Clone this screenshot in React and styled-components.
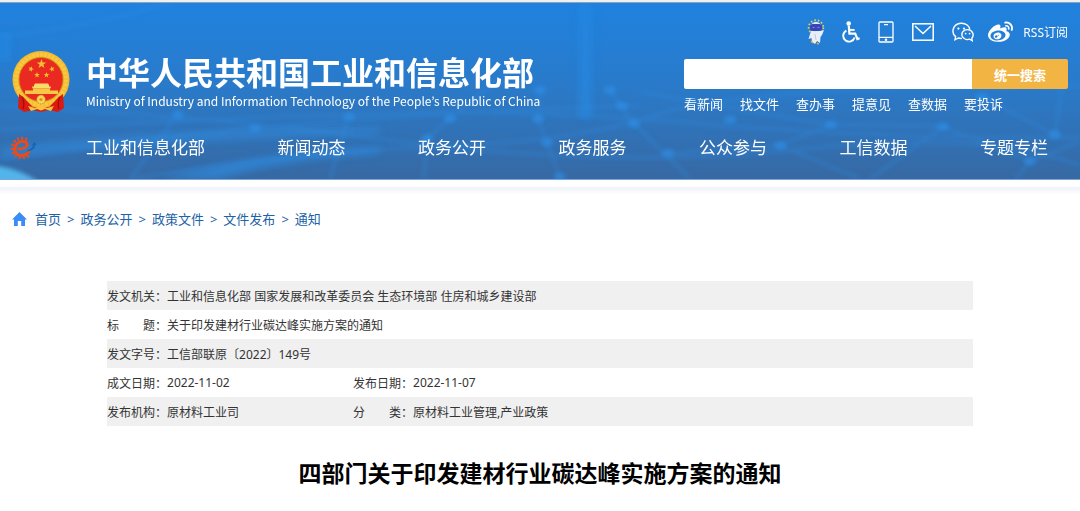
import styled, { createGlobalStyle } from 'styled-components';
import { FaWeibo } from 'react-icons/fa';

const GlobalStyle = createGlobalStyle`
  * {
    box-sizing: border-box;
  }

  body {
    margin: 0;
    background: #fff;
    font-family: 'Noto Sans', 'Noto Sans CJK SC', sans-serif;
    color: #333;
  }

  a {
    color: inherit;
    text-decoration: none;
    white-space: nowrap;
  }
`;

const Header = styled.header`
  position: relative;
  border-top: 2px solid #f0f0f0;
  border-bottom: 1px solid #7ba6d8;
  background: linear-gradient(#1f82df, #2a7ac9 48%, #3769a3);
  color: #fff;
`;

const Backdrop = styled.svg`
  position: absolute;
  inset: 0;
  width: 100%;
  height: 100%;
  border-top: 1px solid #8aa3bd;
`;

const HeaderInner = styled.div`
  position: relative;
  padding: 18px 12px 0;
`;

const HeaderTop = styled.div`
  display: flex;
  justify-content: space-between;
`;

const Brand = styled.a`
  display: flex;
  gap: 16px;
  padding-top: 31px;
`;

const BrandText = styled.div`
  font-family: 'Noto Sans CJK SC', sans-serif;
`;

const BrandName = styled.div`
  font-size: 32px;
  line-height: 40px;
  font-weight: 700;
`;

const BrandEnglish = styled.div`
  font-family: 'Noto Sans CJK KR', sans-serif;
  font-size: 12px;
  line-height: 20px;
`;

const Aside = styled.div`
  flex: 0 1 384px;
`;

const Tools = styled.div`
  display: flex;
  justify-content: flex-end;
  align-items: center;
  gap: 10px;
  height: 24px;
  font-size: 12px;
`;

const ToolLink = styled.a`
  display: flex;
  justify-content: center;
  width: ${props => props.$width}px;
`;

const SearchForm = styled.form`
  display: flex;
  height: 30px;
  margin-top: 15px;
  border-radius: 2px;
  overflow: hidden;
`;

const SearchInput = styled.input`
  flex: 1;
  min-width: 0;
  padding: 0 8px;
  border: 0;
  outline: 0;
  background: #fff;
  font: inherit;
`;

const SearchButton = styled.button`
  width: 96px;
  padding: 0;
  border: 0;
  background: #f2b544;
  color: #fff;
  font: inherit;
  font-size: 13px;
  font-weight: 700;
`;

const QuickLinks = styled.div`
  display: flex;
  gap: 17px;
  margin-top: 6px;
  font-size: 13px;
  line-height: 18px;
`;

const MainNav = styled.nav`
  display: flex;
  align-items: center;
  height: 62px;
  margin-top: 4px;
`;

const NavItems = styled.div`
  display: flex;
  flex: 1;
  justify-content: space-between;
  padding: 0 20px 0 48px;
  font-size: 17px;
  line-height: 24px;
`;

const EnterpriseLogo = styled.a`
  display: flex;
  margin-left: -2px;
`;

const Strip = styled.div`
  height: 15px;
  background: linear-gradient(#fff 7px, #eff2fa 7px, #fff 15px);
`;

const Breadcrumb = styled.nav`
  display: flex;
  align-items: center;
  gap: 6px;
  padding: 14px 12px 0;
  color: #2161a5;
  font-size: 13px;
  line-height: 20px;
`;

const HomeIcon = styled.svg`
  margin-right: 2px;
`;

const Article = styled.main`
  padding: 52px 12px 24px;
`;

const InfoTable = styled.table`
  width: 82%;
  margin: 0 auto;
  border-collapse: collapse;
  table-layout: fixed;
  font-size: 12px;
`;

const InfoColumn = styled.col`
  width: ${props => props.$width};
`;

const InfoRow = styled.tr`
  height: 29px;

  &:nth-child(odd) {
    background: #f0f0f0;
  }
`;

const InfoLabel = styled.th`
  padding: 0;
  font-weight: 400;
  text-align: left;
  white-space: nowrap;
`;

const InfoValue = styled.td`
  padding: 0;
`;

const Headline = styled.h1`
  margin: 30px 0 0;
  color: #000;
  font-size: 23px;
  line-height: 34px;
  font-weight: 700;
  text-align: center;
`;

const NODES = [
  [450, 117],
  [540, 88],
  [610, 88],
  [622, 104],
  [634, 122],
  [547, 141],
  [668, 152],
  [538, 117],
  [730, 118],
  [780, 144],
  [831, 123],
  [943, 125],
  [1055, 133],
  [1030, 160],
  [427, 137],
  [255, 127],
  [178, 113],
  [349, 115],
  [560, 176],
  [982, 95],
];

const LINES = [
  'M0 128 Q200 118 360 112 T700 122 T1080 136',
  'M0 158 Q180 132 330 120 T640 104',
  'M0 104 Q180 112 400 140 T800 148 T1080 164',
  'M130 178 Q300 150 440 145 T660 112 T1080 84',
  'M450 117 L427 137 L424 178',
  'M450 117 L520 60',
  'M540 88 L538 117 L560 176',
  'M610 88 L634 122 L690 178',
  'M668 152 L780 144 L831 123 L943 125',
  'M780 144 L860 178',
  'M943 125 L870 178',
  'M943 125 L1030 160 L1080 140',
  'M982 95 L1055 133 L1064 70',
  'M830 123 L640 90',
  'M1030 160 L1016 178',
  'M178 113 L130 178',
  'M349 115 L330 178',
  'M0 34 Q90 24 170 0',
];

const HeaderBackdrop = () => (
  <Backdrop viewBox="0 0 1080 178" preserveAspectRatio="none" aria-hidden="true">
    <defs>
      <filter id="soft" x="-20%" y="-20%" width="140%" height="140%">
        <feGaussianBlur stdDeviation="2" />
      </filter>
      <filter id="glow" x="-50%" y="-50%" width="200%" height="200%">
        <feGaussianBlur stdDeviation="4" />
      </filter>
      <linearGradient id="beam" x1="0" y1="0" x2="0" y2="1">
        <stop offset="0" stopColor="#2491ef" stopOpacity="0.3" />
        <stop offset="1" stopColor="#2491ef" stopOpacity="0.6" />
      </linearGradient>
    </defs>
    <g fill="none" stroke="#2d8fe8" strokeWidth="3" opacity="0.35" filter="url(#soft)">
      {LINES.map(d => (
        <path key={d} d={d} />
      ))}
    </g>
    <g fill="#2f93ee" opacity="0.6" filter="url(#soft)">
      {NODES.map(([x, y]) => (
        <ellipse key={`${x}-${y}`} cx={x} cy={y} rx="6" ry="4" />
      ))}
    </g>
    <g filter="url(#glow)">
      <rect x="580" y="0" width="11" height="116" fill="url(#beam)" />
      <rect x="0" y="30" width="9" height="30" fill="#2491ef" opacity="0.5" />
      <path d="M0 146 Q180 126 380 126 L380 132 Q180 138 0 156 Z" fill="#2f8fe6" opacity="0.5" />
      <path d="M160 178 Q260 150 380 146 L380 152 Q270 160 220 178 Z" fill="#2f8fe6" opacity="0.6" />
    </g>
    <path d="M-6 164 Q22 168 40 182 L-6 182 Z" fill="#56c2f7" opacity="0.85" filter="url(#soft)" />
  </Backdrop>
);

const STAR = 'M0 -5 L1.2 -1.6 L4.8 -1.5 L1.9 0.6 L2.9 4 L0 2 L-2.9 4 L-1.9 0.6 L-4.8 -1.5 L-1.2 -1.6 Z';

const Emblem = () => (
  <svg width="58" height="61" viewBox="0 0 58 61" aria-hidden="true">
    <path d="M7 42 L51 42 L52 57 L46 61 L37 59 L29 61 L21 59 L12 61 L6 57 Z" fill="#dc1a12" />
    <circle cx="29" cy="28.5" r="28.5" fill="#f3b92f" />
    <circle cx="29" cy="28.5" r="25" fill="none" stroke="#f7c840" strokeWidth="4" strokeDasharray="3 1" />
    <circle cx="29" cy="28.5" r="22" fill="#ea2a20" stroke="#c98a16" strokeWidth="0.8" />
    <g fill="#f1c032">
      <path d={STAR} transform="translate(29.5 13)" />
      <path d={STAR} transform="translate(19 18) scale(0.6) rotate(20)" />
      <path d={STAR} transform="translate(40 18) scale(0.6) rotate(-20)" />
      <path d={STAR} transform="translate(25 24) scale(0.6)" />
      <path d={STAR} transform="translate(34.5 24) scale(0.6)" />
    </g>
    <path d="M22 34 L23 32.5 H36 L37 34 V35.5 H39 L38.5 37.5 H20.5 L20 35.5 H22 Z" fill="#fbdc68" />
    <path d="M21 37.5 H38 V39.5 H46 V43 H13 V39.5 H21 Z" fill="#f6c945" />
    <path d="M7 43 Q11 45 15 50 L20 55 L14 58 L7 56 Z M51 43 Q47 45 43 50 L38 55 L44 58 L51 56 Z" fill="#dc1a12" />
    <path d="M10 46 Q13 52 11 58 M48 46 Q45 52 47 58" stroke="#9d100c" strokeWidth="1.2" fill="none" />
    <circle cx="29" cy="48.5" r="4.4" fill="#f9d458" stroke="#b97d14" strokeWidth="0.8" strokeDasharray="1.4 0.8" />
    <circle cx="29" cy="48.5" r="1.6" fill="#d8961c" />
    <path d="M16 55 L23 57 L29 54.5 L35 57 L42 55 L39 60 L33 58 L29 59.5 L25 58 L19 60 Z" fill="#f6c53d" />
  </svg>
);

const GEAR_ANGLES = [145, 169, 193, 217, 241, 265, 289, 313, 337, 361, 385];

const GearLogo = () => (
  <svg width="28" height="24" viewBox="0 0 28 24" aria-hidden="true">
    <g fill="#ea4b1b">
      {GEAR_ANGLES.map(angle => (
        <rect key={angle} x="10.9" y="0.4" width="2.2" height="3.6" rx="1" transform={`rotate(${angle} 12 12)`} />
      ))}
    </g>
    <path
      d="M8.6 12.8 C13 13.4 18.2 10.8 17 7.6 C15.8 4.4 9 4.6 6.2 8.8 C3.2 13.4 5.4 19.4 11.5 19.4 C15 19.4 17.6 17.6 19.2 15.4"
      fill="none"
      stroke="#ec4a17"
      strokeWidth="2.8"
      strokeLinecap="round"
    />
    <path d="M16 15 C20 14 22.6 12 23 9 L21.4 9.4 L24.6 5.8 L26.8 9.2 L25.4 8.8 C24.6 13 21 16 16 15 Z" fill="#1168b8" />
  </svg>
);

const RobotIcon = () => (
  <svg width="18" height="26" viewBox="0 0 18 26" aria-hidden="true">
    <circle cx="9" cy="8.5" r="7.3" fill="none" stroke="#e8d04c" strokeWidth="1.8" strokeDasharray="1.6 2" />
    <path d="M4 12 Q9 10 13 12 L17 11 L15 16 L13.5 18 L13 24 L10 22 L8 25 L5 23 L4.5 19 L1.5 20 Z" fill="#e9eef9" />
    <circle cx="9" cy="8" r="5.2" fill="#dfe7f8" />
    <rect x="3" y="5" width="12" height="7" rx="3" fill="#3846b8" />
    <path d="M5.5 8.5 h2 M10.5 8.5 h2" stroke="#6f8cf0" strokeWidth="1.2" />
    <path d="M4 22 l2 2 M10 24 l1.6 1.4" stroke="#e8b23c" strokeWidth="1.6" />
    <path d="M8 15 L9 21" stroke="#bfcbe6" strokeWidth="1" />
  </svg>
);

const WheelchairIcon = () => (
  <svg width="18" height="22" viewBox="0 0 18 22" fill="none" stroke="#fff" strokeWidth="1.9" aria-hidden="true">
    <circle cx="6.7" cy="2.6" r="2.3" fill="#fff" stroke="none" />
    <path d="M6.8 5 L7.4 12.6 H13.2 L15.4 18 L17.6 17.2" strokeWidth="2.2" />
    <path d="M7 8.9 H12.6" />
    <path d="M4.4 9.6 A5.8 5.8 0 1 0 12.6 16.4" />
  </svg>
);

const PhoneIcon = () => (
  <svg width="16" height="22" viewBox="0 0 16 22" fill="none" stroke="#fff" strokeWidth="1.3" aria-hidden="true">
    <rect x="1" y="1" width="14" height="20" rx="1" />
    <path d="M1 16.3 H15 M6 3.7 H10" />
    <circle cx="8" cy="18.7" r="0.6" />
  </svg>
);

const MailIcon = () => (
  <svg width="22" height="18" viewBox="0 0 22 18" fill="none" stroke="#fff" strokeWidth="1.5" aria-hidden="true">
    <rect x="0.8" y="0.8" width="20.4" height="16.4" />
    <path d="M3 3 L11 10.5 L19 3" />
  </svg>
);

const WechatIcon = () => (
  <svg width="22" height="20" viewBox="0 0 22 20" fill="none" stroke="#fff" strokeWidth="1.4" aria-hidden="true">
    <path d="M10 16.4 Q8 16.6 6.4 16 L3 17.8 L3.6 14.6 C-1 11 0.4 1.6 9 1.2 C14 1 17.4 4 17.8 7.6" />
    <path d="M15.6 7.6 C10.6 7.6 8.6 12 10.8 15.2 C12.4 17.6 15.6 18 17.6 17.2 L20.2 18.6 L19.8 16.2 C22.6 13 20.6 7.6 15.6 7.6 Z" />
    <g fill="#fff" stroke="none">
      <circle cx="6.4" cy="6.6" r="1.1" />
      <circle cx="12" cy="6.6" r="1.1" />
      <circle cx="13.6" cy="11.6" r="0.9" />
      <circle cx="17.6" cy="11.6" r="0.9" />
    </g>
  </svg>
);

const TOOLS = [
  { label: '智能机器人', width: 25, icon: <RobotIcon /> },
  { label: '无障碍', width: 25, icon: <WheelchairIcon /> },
  { label: '手机版', width: 25, icon: <PhoneIcon /> },
  { label: '邮箱', width: 30, icon: <MailIcon /> },
  { label: '微信', width: 30, icon: <WechatIcon /> },
  { label: '微博', width: 25, icon: <FaWeibo size={25} /> },
];

const QUICK_LINKS = ['看新闻', '找文件', '查办事', '提意见', '查数据', '要投诉'];

const NAV_ITEMS = ['工业和信息化部', '新闻动态', '政务公开', '政务服务', '公众参与', '工信数据', '专题专栏'];

const CRUMBS = ['政务公开', '政策文件', '文件发布', '通知'];

const INFO_ROWS = [
  [['发文机关：', '工业和信息化部 国家发展和改革委员会 生态环境部 住房和城乡建设部']],
  [['标　　题：', '关于印发建材行业碳达峰实施方案的通知']],
  [['发文字号：', '工信部联原〔2022〕149号']],
  [
    ['成文日期：', '2022-11-02'],
    ['发布日期：', '2022-11-07'],
  ],
  [
    ['发布机构：', '原材料工业司'],
    ['分　　类：', '原材料工业管理,产业政策'],
  ],
];

const InfoCells = ({ cell: [label, value], span }) => (
  <>
    <InfoLabel scope="row">{label}</InfoLabel>
    <InfoValue colSpan={span}>{value}</InfoValue>
  </>
);

const SiteHeader = () => (
  <Header>
    <HeaderBackdrop />
    <HeaderInner>
      <HeaderTop>
        <Brand href="#">
          <Emblem />
          <BrandText>
            <BrandName>中华人民共和国工业和信息化部</BrandName>
            <BrandEnglish lang="en">
              Ministry of Industry and Information Technology of the People’s Republic of China
            </BrandEnglish>
          </BrandText>
        </Brand>
        <Aside>
          <Tools>
            {TOOLS.map(tool => (
              <ToolLink key={tool.label} href="#" $width={tool.width} aria-label={tool.label}>
                {tool.icon}
              </ToolLink>
            ))}
            <a href="#">RSS订阅</a>
          </Tools>
          <SearchForm role="search" onSubmit={e => e.preventDefault()}>
            <SearchInput type="text" aria-label="搜索" />
            <SearchButton type="submit">统一搜索</SearchButton>
          </SearchForm>
          <QuickLinks>
            {QUICK_LINKS.map(text => (
              <a key={text} href="#">
                {text}
              </a>
            ))}
          </QuickLinks>
        </Aside>
      </HeaderTop>
      <MainNav>
        <EnterpriseLogo href="#" aria-label="工业和信息化部">
          <GearLogo />
        </EnterpriseLogo>
        <NavItems>
          {NAV_ITEMS.map(text => (
            <a key={text} href="#">
              {text}
            </a>
          ))}
        </NavItems>
      </MainNav>
    </HeaderInner>
  </Header>
);

const App = () => (
  <>
    <GlobalStyle />
    <SiteHeader />
    <Strip />
    <Breadcrumb>
      <HomeIcon width="15" height="14" viewBox="0 0 15 14" aria-hidden="true">
        <path d="M7.5 0 L15 7.4 H13 V14 H9.2 V9 H5.8 V14 H2 V7.4 H0 Z" fill="#3c8cf5" />
      </HomeIcon>
      <a href="#">首页</a>
      {CRUMBS.map(text => [
        <span key={`${text}-sep`}>&gt;</span>,
        <a key={text} href="#">
          {text}
        </a>,
      ])}
    </Breadcrumb>
    <Article>
      <InfoTable>
        <colgroup>
          <InfoColumn $width="60px" />
          <InfoColumn $width="186px" />
          <InfoColumn $width="60px" />
          <InfoColumn $width="auto" />
        </colgroup>
        <tbody>
          {INFO_ROWS.map(cells => (
            <InfoRow key={cells[0][0]}>
              {cells.map(cell => (
                <InfoCells key={cell[0]} cell={cell} span={cells.length === 1 ? 3 : 1} />
              ))}
            </InfoRow>
          ))}
        </tbody>
      </InfoTable>
      <Headline>四部门关于印发建材行业碳达峰实施方案的通知</Headline>
    </Article>
  </>
);

export default App;
